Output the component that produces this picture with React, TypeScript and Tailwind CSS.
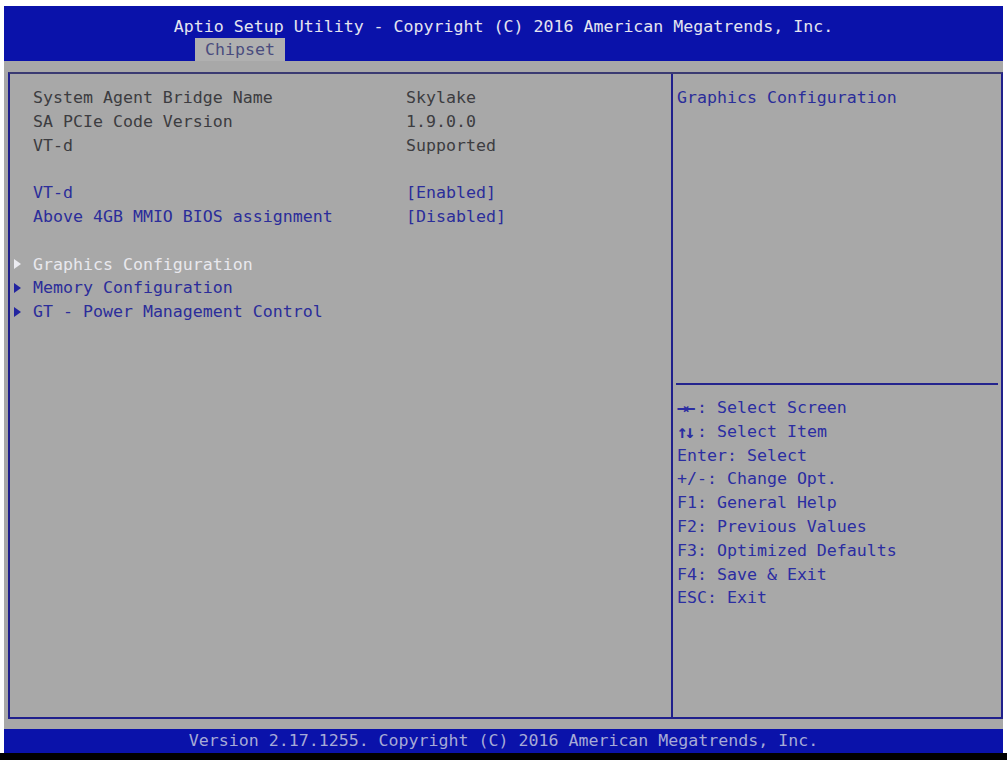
import React from "react";

const Arrow = ({ color }: { color: string }) => (
  <svg width="7" height="10" viewBox="0 0 7 10" className="block">
    <polygon points="0,0 7,5 0,10" fill={color} />
  </svg>
);

export default function App() {
  const info = [
    ["System Agent Bridge Name", "Skylake"],
    ["SA PCIe Code Version", "1.9.0.0"],
    ["VT-d", "Supported"],
  ];
  const opts = [
    ["VT-d", "[Enabled]"],
    ["Above 4GB MMIO BIOS assignment", "[Disabled]"],
  ];
  const subs = [
    { t: "Graphics Configuration", sel: true },
    { t: "Memory Configuration", sel: false },
    { t: "GT - Power Management Control", sel: false },
  ];
  const help: [string, string][] = [
    ["→←", ": Select Screen"],
    ["↑↓", ": Select Item"],
    ["", "Enter: Select"],
    ["", "+/-: Change Opt."],
    ["", "F1: General Help"],
    ["", "F2: Previous Values"],
    ["", "F3: Optimized Defaults"],
    ["", "F4: Save & Exit"],
    ["", "ESC: Exit"],
  ];
  return (
    <div className="w-[1007px] h-[760px] bg-white overflow-hidden font-['DejaVu_Sans_Mono','Liberation_Mono',monospace] text-[16.6px] leading-[23.8px] whitespace-pre">
      <div className="h-[6px]" />
      <div className="ml-[4px] w-[999px]">
        {/* Header */}
        <div className="h-[55px] bg-[#0a12aa] flex flex-col">
          <div className="h-[32px] pt-[9px] leading-[23px] text-center text-[#e4e4f0]">
            Aptio Setup Utility - Copyright (C) 2016 American Megatrends, Inc.
          </div>
          <div className="h-[23px] flex">
            <div className="ml-[191px] w-[90px] h-[23px] leading-[23px] bg-[#b0b0b0] text-[#4a4c7e] text-center">
              Chipset
            </div>
          </div>
        </div>
        {/* Body */}
        <div className="h-[668px] bg-[#a8a8a8] pt-[11px] pl-[4px] pb-[10px]">
          <div className="h-[647px] border-2 border-[#20208c] border-t-[#3a3a72] flex">
            {/* Left */}
            <div className="w-[663px] h-full border-r-2 border-[#20208c] pt-[12px]">
              {info.map(([l, v]) => (
                <div key={l} className="flex pl-[23px] text-[#3c3c40]">
                  <div className="w-[373px]">{l}</div>
                  <div>{v}</div>
                </div>
              ))}
              <div className="h-[23.8px]" />
              {opts.map(([l, v]) => (
                <div key={l} className="flex pl-[23px] text-[#2b2d9a]">
                  <div className="w-[373px]">{l}</div>
                  <div>{v}</div>
                </div>
              ))}
              <div className="h-[23.8px]" />
              {subs.map((s) => (
                <div key={s.t} className="flex items-center pl-[4px]">
                  <div className="w-[19px] flex items-center">
                    <Arrow color={s.sel ? "#ececf2" : "#2224a0"} />
                  </div>
                  <div className={s.sel ? "text-[#e8e8ee]" : "text-[#2b2d9a]"}>{s.t}</div>
                </div>
              ))}
            </div>
            {/* Right */}
            <div className="flex-1 h-full flex flex-col">
              <div className="h-[309px] pt-[12px] pl-[4px] text-[#2b2d9a]">Graphics Configuration</div>
              <div className="h-[2px] mx-[3px] bg-[#24248e]" />
              <div className="pt-[11px] pl-[4px] text-[#2b2da2]">
                {help.map(([a, h]) => (
                  <div key={h} className="flex">
                    {a && (
                      <span className="inline-block w-[20px] font-bold text-[18px] tracking-[-3px]">{a}</span>
                    )}
                    <span>{h}</span>
                  </div>
                ))}
              </div>
            </div>
          </div>
        </div>
        {/* Footer */}
        <div className="h-[24px] bg-[#0a12aa] text-center leading-[24px] text-[#a6aad6]">
          Version 2.17.1255. Copyright (C) 2016 American Megatrends, Inc.
        </div>
      </div>
      <div className="h-[7px] bg-black" />
    </div>
  );
}
